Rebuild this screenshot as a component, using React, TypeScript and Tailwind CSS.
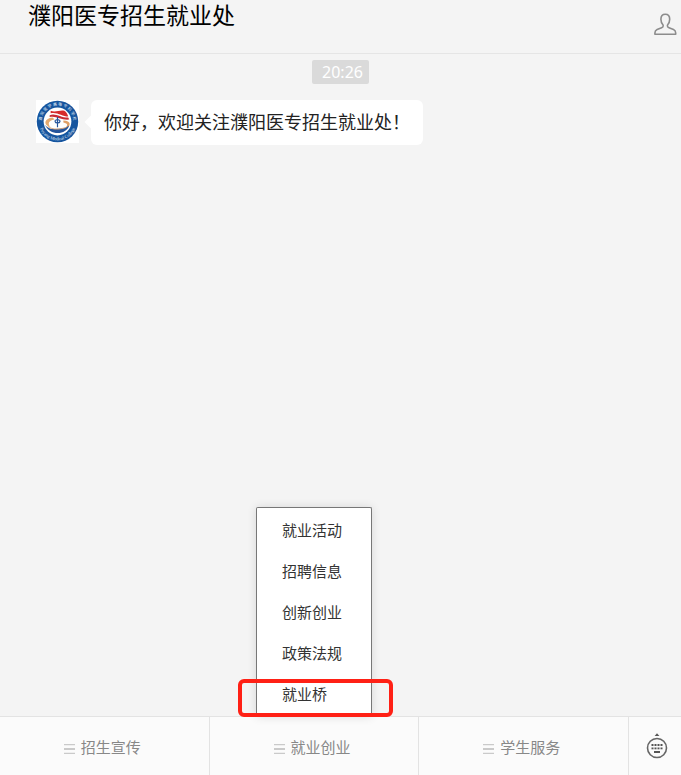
interface Tab {
  label: string
  items?: string[]
}

const tabs: Tab[] = [
  { label: "招生宣传" },
  { label: "就业创业", items: ["就业活动", "招聘信息", "创新创业", "政策法规", "就业桥"] },
  { label: "学生服务" },
]

const marked = "就业桥"

function CollegeLogo() {
  return (
    <svg viewBox="0 0 44 44" className="size-[43px] shrink-0 bg-white" role="img" aria-label="濮阳医学高等专科学校">
      <defs>
        <path id="arc-top" d="M6.2 26 A16.3 16.3 0 1 1 37.8 26" />
        <path id="arc-bottom" d="M2.9 24 A19.2 19.2 0 0 0 41.1 24" />
      </defs>
      <circle cx="22" cy="22" r="21.2" fill="#15559f" />
      <circle cx="22" cy="22" r="14.2" fill="#fff" />
      <text fill="#e4edf7" fontSize="4" textAnchor="middle">
        <textPath href="#arc-top" startOffset="50%">濮 阳 医 学 高 等 专 科 学 校</textPath>
      </text>
      <text fill="#e4edf7" fontSize="4.6" textAnchor="middle" fontFamily="Liberation Serif, serif">
        <textPath href="#arc-bottom" startOffset="50%">Puyang Medical College</textPath>
      </text>
      <path d="M15 11 C20 13 24 10 29 11 C31 12 32 14 33 17 C27 17 22 12 15 13.5 Z" fill="#d62b2b" />
      <path d="M14 15.5 C20 13 25 18 33 18 L34 20 C26 21 20 15.5 14 17.5 Z" fill="#c92a32" />
      <path d="M17 18 C8 19 7 26 15 28 C12 25 12 21 19 20 Z" fill="#e3a96f" />
      <path d="M28 21 C36 21 37 27 29 29.5 C33 26 33 24 28 23 Z" fill="#e0a066" />
      <path d="M9 25 C13 31 21 30 27 29 C30 29 33 27 34 26 C31 36 14 37 9 25 Z" fill="#24549b" />
      <path d="M12 27 C17 31 25 30 31 28" fill="none" stroke="#dfa878" strokeWidth="1" />
      <path d="M22 17.5 V28 M19.5 22 C19 19.5 25 19.5 24.5 22 C24 24 20 24 19.5 22" fill="none" stroke="#24549b" strokeWidth="1.2" />
    </svg>
  )
}

function PersonIcon() {
  return (
    <svg viewBox="0 0 24 24" className="size-6" fill="none" stroke="#8c8c8c" strokeWidth="1.6" strokeLinejoin="round" aria-hidden="true">
      <path d="M10.2 13.3 C8.7 11.8 7.9 9.5 7.9 7.3 C7.9 4 9.6 2.2 12.3 2.2 C15 2.2 16.7 4 16.7 7.3 C16.7 9.5 15.9 11.8 14.4 13.3 C14.2 14.5 14.8 15.2 16 15.7 L20.5 17.5 C22 18.2 22.7 19.3 22.7 21 V22.2 H1.9 V21 C1.9 19.3 2.6 18.2 4.1 17.5 L8.6 15.7 C9.8 15.2 10.4 14.5 10.2 13.3 Z" />
    </svg>
  )
}

function KeyboardIcon() {
  return (
    <svg viewBox="0 0 24 28" className="h-7 w-6" fill="#555" aria-hidden="true">
      <path d="M12 1.2 L14.4 4 H9.6 Z" />
      <circle cx="12" cy="16" r="9.5" fill="none" stroke="#666" strokeWidth="1.6" />
      {[6, 9, 12, 15].map((x) => (
        <g key={x}>
          <rect x={x + 0.5} y="12" width="2" height="2" />
          <rect x={x + 0.5} y="15.5" width="2" height="1.8" />
        </g>
      ))}
      <rect x="9" y="19" width="6" height="2" />
    </svg>
  )
}

function MenuLines() {
  return (
    <svg viewBox="0 0 11 10" className="mt-1 h-2.5 w-[11px]" shapeRendering="crispEdges" aria-hidden="true">
      <g fill="#cacaca">
        <rect width="11" height="1" />
        <rect y="4" width="11" height="2" />
        <rect y="9" width="11" height="1" />
      </g>
      <g fill="#efefef">
        <rect y="1" width="11" height="1" />
        <rect y="8" width="11" height="1" />
      </g>
    </svg>
  )
}

function TabMenu({ items }: { items: string[] }) {
  return (
    <ul className="absolute bottom-full left-1/2 w-29 -translate-x-1/2 rounded-t-xs border border-b-0 border-[#777] bg-white py-0.5 shadow-[0_0_10px_rgba(0,0,0,0.12)]">
      {items.map((item) => (
        <li key={item} className="relative">
          <button type="button" className="h-[41px] w-full pl-[25px] text-left text-[15px] text-[#333]">
            {item}
          </button>
          {item === marked && (
            <span className="pointer-events-none absolute top-[5px] -right-[22px] -bottom-0.5 -left-[19px] rounded-md border-4 border-[#ff2015]" />
          )}
        </li>
      ))}
    </ul>
  )
}

export default function App() {
  return (
    <div className="flex min-h-screen flex-col bg-[#f4f4f4] font-['Noto_Sans','Noto_Sans_CJK_SC',sans-serif]">
      <header className="flex h-[54px] items-start justify-between border-b border-[#e5e5e5] pr-1 pl-7">
        <h1 className="text-[23px] leading-[30px] text-black">濮阳医专招生就业处</h1>
        <button type="button" aria-label="账号资料" className="mt-3">
          <PersonIcon />
        </button>
      </header>

      <main className="flex flex-1 flex-col pt-1.5">
        <time className="self-center rounded-xs bg-[#dadada] pr-1.5 pl-2.5 text-base leading-6 text-white">20:26</time>
        <div className="mt-4 flex items-start gap-3 px-9">
          <CollegeLogo />
          <div className="relative rounded-md bg-white px-[13px] text-lg leading-[45px] text-[#222]">
            <span className="absolute top-4 -left-1 size-3 rotate-45 bg-white" />
            <p className="relative">你好，欢迎关注濮阳医专招生就业处！</p>
          </div>
        </div>
      </main>

      <footer className="flex h-[59px] border-t border-[#e3e3e3] bg-[#fbfbfb]">
        <nav className="flex flex-1">
          {tabs.map((tab) => (
            <div key={tab.label} className="relative flex-1 border-r border-[#e3e3e3]">
              <button type="button" className="flex h-full w-full items-center justify-center gap-1.5 pt-0.5 pr-1 text-[15px] text-[#888]">
                <MenuLines />
                {tab.label}
              </button>
              {tab.items && <TabMenu items={tab.items} />}
            </div>
          ))}
        </nav>
        <button type="button" aria-label="键盘" className="flex w-13 items-center justify-center pl-1">
          <KeyboardIcon />
        </button>
      </footer>
    </div>
  )
}
